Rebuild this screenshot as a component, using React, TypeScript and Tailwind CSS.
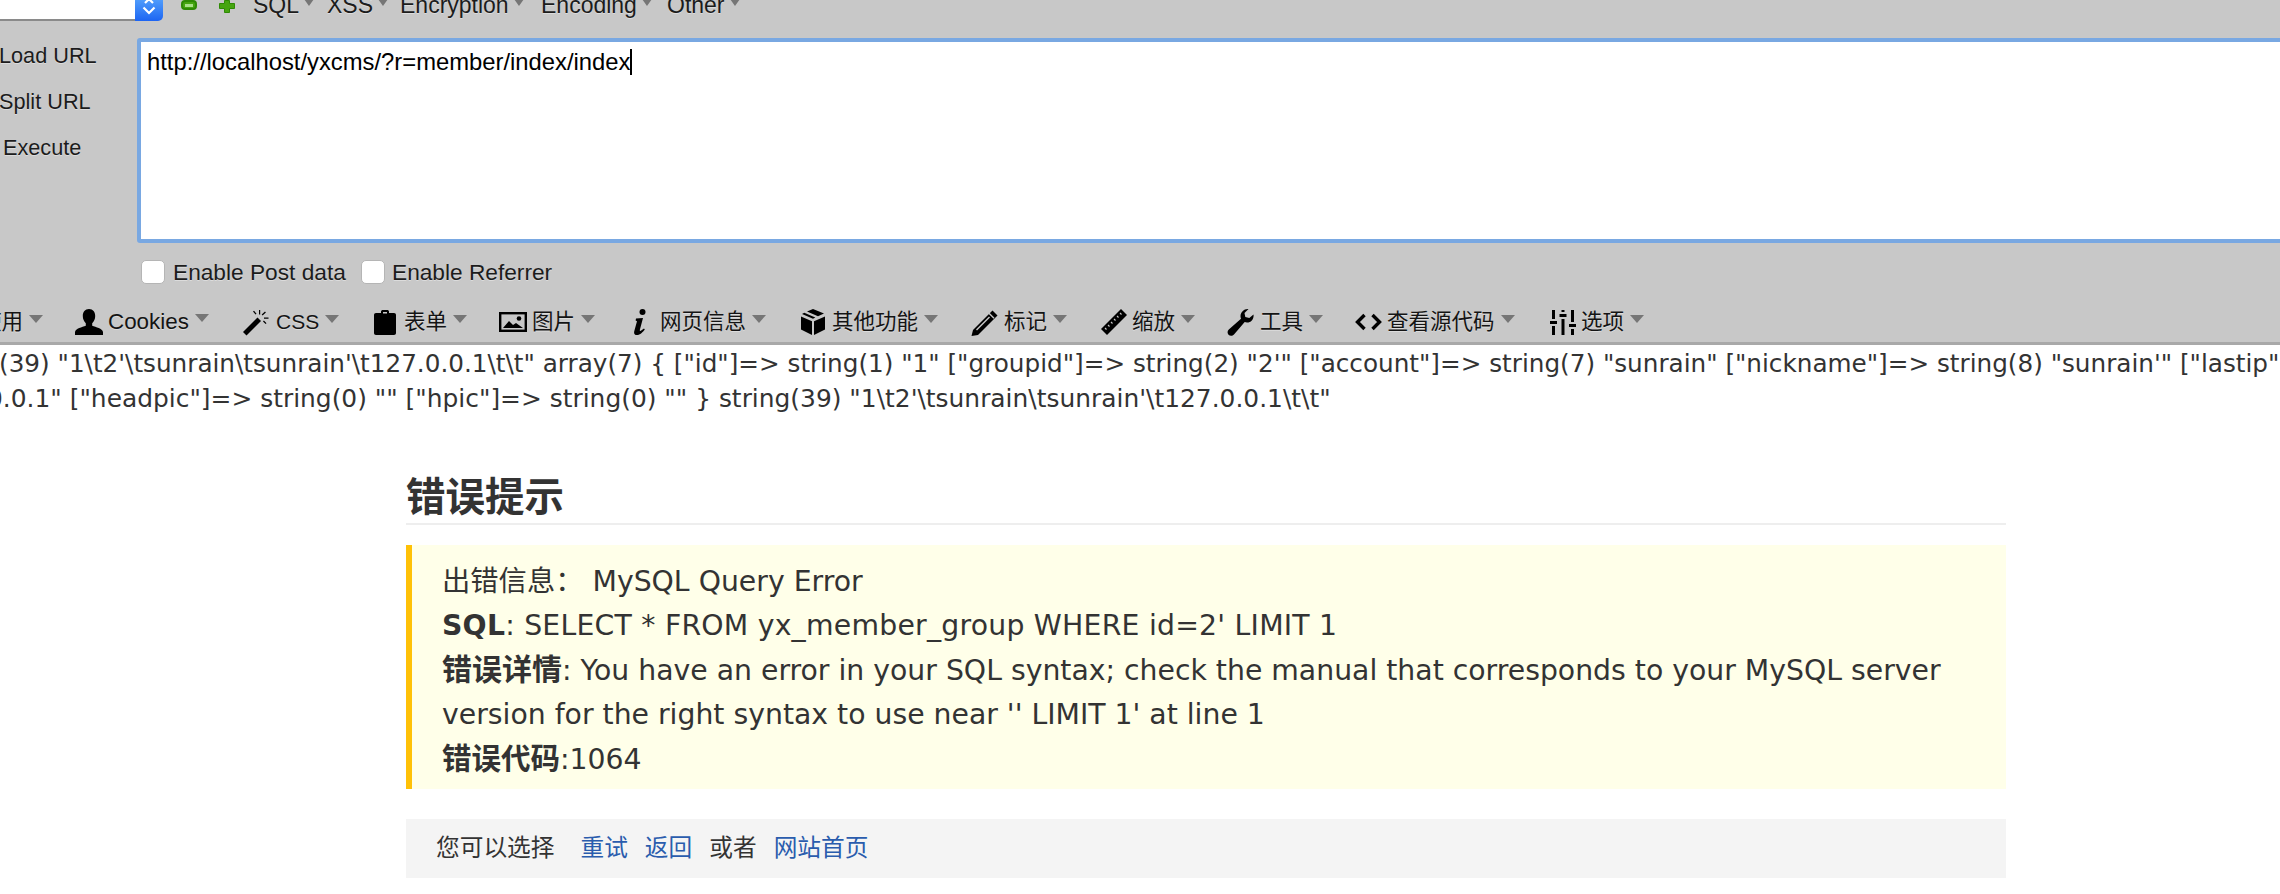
import React from "react";

const Caret = () => (
  <span className="inline-block w-0 h-0 border-l-[7px] border-r-[7px] border-t-[8px] border-l-transparent border-r-transparent border-t-[#767676] ml-[6px] mb-[7px] shrink-0" />
);
const TopCaret = () => (
  <span className="inline-block w-0 h-0 border-l-[5px] border-r-[5px] border-t-[7px] border-l-transparent border-r-transparent border-t-[#767676] ml-[5px] mb-[6px] shrink-0" />
);

const User = () => (
  <svg width="28" height="26" viewBox="0 0 28 26" fill="#000"><path d="M14 0c4 0 6.200 3 6.200 7 0 3-1.200 5.600-3 7.200v2.600c3.600 1.400 10.300 2.600 10.800 6.200v3H0v-3c.5-3.600 7.200-4.800 10.800-6.200v-2.600C9 12.600 7.800 10 7.800 7c0-4 2.200-7 6.200-7z"/></svg>
);
const Wand = () => (
  <svg width="27" height="27" viewBox="0 0 27 27" fill="#000"><path d="M0 23 14.500 8.500 18 12 3.500 26.500z"/><path d="M16 1h1.200v4.500H16zM21 8.500h4.500v1.200H21zM10 2.500l1-.8 2.500 3-1 .8zM22 2.500l.9.9-3.300 3-.9-.9zM20 12.500l.9-.9 2.600 2.600-.9.9z"/></svg>
);
const Clip = () => (
  <svg width="22" height="25" viewBox="0 0 22 25" fill="#000"><path d="M2 3h5V1.500C7 .5 8 0 9 0h4c1 0 2 .5 2 1.500V3h5c1.200 0 2 .8 2 2v18c0 1.200-.8 2-2 2H2c-1.200 0-2-.8-2-2V5c0-1.200.8-2 2-2z"/><path d="M9 2h4v1.500H9z" fill="#c8c8c8"/></svg>
);
const Pic = () => (
  <svg width="28" height="20" viewBox="0 0 28 20"><rect x="1.200" y="1.200" width="25.600" height="17.600" fill="#c8c8c8" stroke="#000" strokeWidth="2.400"/><path d="M4 16l6-7 4 4 3-2 7 5z" fill="#000"/><circle cx="20" cy="6.500" r="2.300" fill="#000"/></svg>
);
const Info = () => (
  <svg width="15" height="26" viewBox="0 0 15 26" fill="#000"><circle cx="9.500" cy="3" r="3"/><path d="M3 9.500l7-.5-3.200 12c-.2 1 .6 1.200 1.400.6l2.800-2.200.8 1C9.800 22.800 7.300 26 3.800 26 1.200 26 .8 24 1.300 22L4 12.200l-1.400-.6z"/></svg>
);
const Cube = () => (
  <svg width="26" height="26" viewBox="0 0 26 26" fill="#000"><path d="M13 0l11 4.500-6 2.700L7 2.600zM4.300 3.800l11 4.700L13 9.700 2 5z"/><path d="M1 7.500l11 4.700V26L1 20.500zM25 7.500V20.500L14 26V12.200z"/></svg>
);
const Pencil = () => (
  <svg width="28" height="27" viewBox="0 0 28 27"><path d="M21.500 1.500l5 5L7 26l-6.500 1 1.500-6z" fill="#000"/><path d="M18 7.500l1 1L6 21.500l-1-1z" fill="#c8c8c8"/><path d="M17.500 4.800l1-1 5 5-1 1z" fill="#c8c8c8"/></svg>
);
const Ruler = () => (
  <svg width="26" height="26" viewBox="0 0 26 26"><path d="M20 0l6 6L6 26l-6-6z" fill="#000"/><path d="M19 4l1.500 1.500M16 7l1.500 1.500M13 10l1.500 1.500M10 13l1.500 1.500M7 16l1.500 1.500M4 19l1.500 1.500" stroke="#c8c8c8" strokeWidth="1.100"/></svg>
);
const Wrench = () => (
  <svg width="27" height="27" viewBox="0 0 27 27" fill="#000"><path d="M26.500 5.500c.6 4-2 8-6.500 8-.8 0-1.600-.2-2.300-.4L7 25.500C5.500 27.200 3 27.300 1.500 25.800.2 24.400.2 22 1.800 20.600L14 9.800c-.3-.8-.5-1.600-.5-2.500C13.500 3 17.500-.5 21.500.1l-4 3.900.8 4 4 1z"/></svg>
);
const Code = () => (
  <svg width="27" height="18" viewBox="0 0 27 18" fill="none" stroke="#000" strokeWidth="3.400"><path d="M9.500 2 2.500 9l7 7M17.500 2l7 7-7 7"/></svg>
);
const Sliders = () => (
  <svg width="26" height="25" viewBox="0 0 26 25" fill="#000"><path d="M2 0h3v9H2zM0 11h7v3H0zM2 16h3v9H2zM11.500 0h3v2h-3zM9.500 4h7v3h-7zM11.500 9h3v16h-3zM21 0h3v12h-3zM19 14h7v3h-7zM21 19h3v6h-3z"/></svg>
);

const menus = [
  { w: "w-[168px]", icon: <User />, label: "Cookies", gap: "gap-[5px]", size: "text-[22.4px]" },
  { w: "w-[131px]", icon: <Wand />, label: "CSS", gap: "gap-[6px]", size: "text-[21px]" },
  { w: "w-[125px]", icon: <Clip />, label: "表单", gap: "gap-[8px]", size: "" },
  { w: "w-[134px]", icon: <Pic />, label: "图片", gap: "gap-[5px]", size: "" },
  { w: "w-[167px]", icon: <Info />, label: "网页信息", gap: "gap-[12px]", size: "" },
  { w: "w-[171px]", icon: <Cube />, label: "其他功能", gap: "gap-[6px]", size: "" },
  { w: "w-[130px]", icon: <Pencil />, label: "标记", gap: "gap-[5px]", size: "" },
  { w: "w-[126px]", icon: <Ruler />, label: "缩放", gap: "gap-[5px]", size: "" },
  { w: "w-[128px]", icon: <Wrench />, label: "工具", gap: "gap-[6px]", size: "" },
  { w: "w-[195px]", icon: <Code />, label: "查看源代码", gap: "gap-[5px]", size: "" },
  { w: "w-[100px]", icon: <Sliders />, label: "选项", gap: "gap-[5px]", size: "" },
];

export default function App() {
  return (
    <div className="w-[2280px] h-[894px] overflow-hidden bg-white text-[#000] font-['Liberation_Sans','Noto_Sans_CJK_SC',sans-serif]">
      <div className="h-[345px] bg-[#c8c8c8] border-b-[3px] border-[#a9a9a9] overflow-hidden [text-shadow:0_1px_0_#dcdcdc]">
        <div className="h-[38px] flex items-start">
          <div className="w-[163px] h-[21px] flex shrink-0">
            <div className="w-[135px] h-[21px] bg-white border-b-2 border-[#8a8a8a]" />
            <div className="w-[28px] h-[21px] rounded-br-[5px] bg-gradient-to-b from-[#4f9bfb] to-[#1d64f2] flex items-start justify-center">
              <svg width="16" height="16" viewBox="0 0 16 16" fill="none" stroke="#fff" strokeWidth="2.200"><path d="M4 3 8 -1l4 4M2.500 7.500 8 13l5.500-5.500" /></svg>
            </div>
          </div>
          <div className="ml-[18px] w-[16px] h-[10px] rounded-[4px] bg-[#46a510] border-2 border-[#2f8a05] shrink-0 flex items-center justify-center">
            <div className="w-[8px] h-[3px] bg-[#a9e088]" />
          </div>
          <svg className="ml-[22px] shrink-0" width="16" height="13" viewBox="0 0 16 13" fill="#46a510" stroke="#2f8a05" strokeWidth="1"><path d="M5.500 .5h5v3h5v5h-5v4h-5v-4h-5v-5h5z" strokeLinejoin="round" /></svg>
          <div className="flex items-center -mt-[8px] h-[26px] ml-[18px] text-[23px] text-[#1c1c1c] whitespace-nowrap">
            <div className="w-[74px] flex items-center">SQL<TopCaret /></div>
            <div className="w-[73px] flex items-center">XSS<TopCaret /></div>
            <div className="w-[141px] flex items-center">Encryption<TopCaret /></div>
            <div className="w-[126px] flex items-center">Encoding<TopCaret /></div>
            <div className="flex items-center">Other<TopCaret /></div>
          </div>
        </div>
        <div className="flex h-[205px]">
          <div className="w-[137px] shrink-0 flex flex-col text-[21.7px] leading-[46px] text-[#1c1c1c] whitespace-nowrap">
            <div className="-ml-[1px] -mt-[5px]">Load URL</div>
            <div className="-ml-[1px]">Split URL</div>
            <div className="ml-[3px]">Execute</div>
          </div>
          <div className="w-[2180px] shrink-0 h-[205px] bg-white border-[4px] border-[#79a8e2] rounded-[3px] pl-[6px] pt-[4px] text-[23.8px] leading-[32px] whitespace-nowrap flex items-start [text-shadow:none]">
            <span>http://localhost/yxcms/?r=member/index/index</span>
            <span className="inline-block w-[2px] h-[26px] mt-[3px] bg-black" />
          </div>
        </div>
        <div className="flex items-center h-[24px] mt-[17px] pl-[141px] text-[22.7px] text-[#1c1c1c] whitespace-nowrap">
          <span className="w-[24px] h-[24px] rounded-[5px] bg-white border border-[#b5b5b5] shrink-0" />
          <span className="ml-[8px] w-[188px]">Enable Post data</span>
          <span className="w-[24px] h-[24px] rounded-[5px] bg-white border border-[#b5b5b5] shrink-0" />
          <span className="ml-[7px]">Enable Referrer</span>
        </div>
        <div className="flex items-center h-[34px] mt-[21px] text-[21.5px] text-[#141414] whitespace-nowrap">
          <div className="w-[75px] flex items-center">
            <span className="-ml-[20px]">使用</span>
            <Caret />
          </div>
          {menus.map((m) => (
            <div key={m.label} className={`${m.w} flex items-center shrink-0 ${m.gap}`}>
              <span className="flex items-center">{m.icon}</span>
              <span className={`flex items-center ${m.size}`}>
                {m.label}
                <Caret />
              </span>
            </div>
          ))}
        </div>
      </div>
      <div className="font-['DejaVu_Sans','Noto_Sans_CJK_SC',sans-serif] text-[#333]">
        <div className="h-[35px] leading-[35px] whitespace-nowrap text-[24.7px] mt-[1px] -ml-[1px]">
          {`(39) "1\\t2'\\tsunrain\\tsunrain'\\t127.0.0.1\\t\\t" array(7) { ["id"]=> string(1) "1" ["groupid"]=> string(2) "2'" ["account"]=> string(7) "sunrain" ["nickname"]=> string(8) "sunrain'" ["lastip"]`}
        </div>
        <div className="h-[35px] leading-[35px] whitespace-nowrap text-[24.9px]">
          <span className="-ml-[13px] inline-block">{`0.0.1" ["headpic"]=> string(0) "" ["hpic"]=> string(0) "" } string(39) "1\\t2'\\tsunrain\\tsunrain'\\t127.0.0.1\\t\\t"`}</span>
        </div>
        <div className="ml-[406px] w-[1600px] mt-[57px]">
          <div className="h-[52px] border-b-2 border-[#eee] text-[39.500px] font-bold leading-[49px] text-[#333]">错误提示</div>
          <div className="mt-[20px] h-[244px] bg-[#ffffe9] border-l-[6px] border-[#ffc107] pl-[30px] pt-[15px] text-[28.3px] leading-[44px] whitespace-nowrap">
            <div>出错信息： MySQL Query Error</div>
            <div className="tracking-[0.23px]"><b>SQL</b>: SELECT * FROM yx_member_group WHERE id=2' LIMIT 1</div>
            <div><b className="text-[30px]">错误详情</b>: You have an error in your SQL syntax; check the manual that corresponds to your MySQL server</div>
            <div>version for the right syntax to use near '' LIMIT 1' at line 1</div>
            <div><b className="text-[29.5px]">错误代码</b>:1064</div>
          </div>
          <div className="mt-[30px] h-[59px] bg-[#f4f4f4] pl-[30px] flex items-center text-[23.7px] whitespace-nowrap">
            <span>您可以选择</span>
            <a className="ml-[26px] text-[#2a5cad]">重试</a>
            <a className="ml-[17px] text-[#2a5cad]">返回</a>
            <span className="ml-[17px]">或者</span>
            <a className="ml-[17px] text-[#2a5cad]">网站首页</a>
          </div>
        </div>
      </div>
    </div>
  );
}
